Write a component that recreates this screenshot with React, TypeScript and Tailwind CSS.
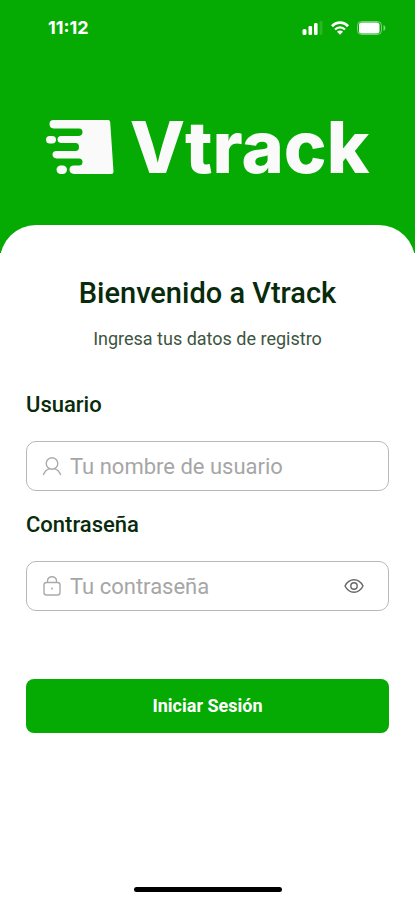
import { useState } from "react";
import type { ReactNode } from "react";

function SignalIcon() {
  return (
    <svg width="21" height="14" viewBox="0 0 21 14" fill="white" aria-hidden="true">
      <rect x="0.5" y="8" width="4" height="6" rx="1.6" />
      <rect x="6.5" y="5" width="3.6" height="9" rx="1.2" />
      <rect x="12" y="2" width="3.6" height="12" rx="1.2" />
      <rect x="17.5" y="0" width="3" height="14" rx="1.2" opacity="0.15" />
    </svg>
  );
}

function WifiIcon() {
  return (
    <svg width="18" height="14" viewBox="0 0 18 14" fill="none" stroke="white" aria-hidden="true">
      <path d="M1 5.2C5.4 0.3 12.6 0.3 17 5.2" strokeWidth="2.8" />
      <path d="M4 8.6C6.8 5.6 11.2 5.6 14 8.6" strokeWidth="2.2" />
      <path d="M9 13.8L6 10.8C7.8 9.2 10.2 9.2 12 10.8Z" fill="white" stroke="none" />
    </svg>
  );
}

function BatteryIcon() {
  return (
    <svg width="30" height="14" viewBox="0 0 30 14" fill="none" aria-hidden="true">
      <rect x="0.5" y="0.5" width="24" height="13" rx="4" stroke="white" strokeOpacity="0.45" />
      <rect x="2" y="1.5" width="20.5" height="11" rx="2.5" fill="white" />
      <path d="M26.5 4C29 5.2 29 8.8 26.5 10Z" fill="white" fillOpacity="0.5" />
    </svg>
  );
}

function StatusBar() {
  return (
    <div className="flex h-14 items-center justify-between pr-7 pl-12">
      <span className="font-[Inter,sans-serif] text-lg font-bold">11:12</span>
      <div className="flex items-center gap-2">
        <SignalIcon />
        <WifiIcon />
        <BatteryIcon />
      </div>
    </div>
  );
}

// Box with speed lines on its left side
function LogoMark() {
  return (
    <svg width="68" height="54" viewBox="0 0 68 54" fill="#fafafa" aria-hidden="true">
      <path d="M7.5 0H62Q64 0 64.2 2L67.5 51.5Q67.5 54 65 54H28Q23.5 53.5 23.5 49.5Q23.5 45.5 28 45.5H33Q36.5 45.5 36.5 42Q36.5 38.5 33 38.5H10.5Q6.5 38 6.5 34.5Q6.5 31 10.5 31H29.5Q33 31 33 27Q33 23 29.5 23H15Q11.5 22.5 11.5 19.5Q11.5 16 15 16H33Q36.5 15.5 36.5 12Q36.5 8.5 33 8.5H7.5Q3.5 8 3.5 4Q3.5 0 7.5 0Z" />
      <rect x="0" y="16" width="10" height="7.5" rx="3.7" />
      <rect x="10.5" y="45.5" width="10.5" height="8.5" rx="4.2" />
    </svg>
  );
}

function UserIcon() {
  return (
    <svg width="20" height="20" viewBox="0 0 20 20" fill="none" stroke="#aaaaaa" strokeWidth="1.4" strokeLinecap="round" aria-hidden="true">
      <circle cx="10" cy="7.5" r="5.8" />
      <path d="M1.5 18.5C2.7 15.4 4.7 13.6 7 12.8M13 12.8C15.3 13.6 17.3 15.4 18.5 18.5" />
    </svg>
  );
}

function LockIcon() {
  return (
    <svg width="20" height="20" viewBox="0 0 20 20" fill="none" stroke="#aaaaaa" strokeWidth="1.4" aria-hidden="true">
      <rect x="2" y="6.5" width="16" height="12.5" rx="2.5" />
      <path d="M5.5 6.5V5C5.500 2.200 7.500 0.800 10 0.800S14.500 2.200 14.500 5V6.500" />
      <circle cx="10" cy="12.5" r="1" fill="#aaaaaa" stroke="none" />
    </svg>
  );
}

function EyeIcon() {
  return (
    <svg width="20" height="16" viewBox="0 0 20 16" fill="none" stroke="#666666" strokeWidth="1.4" aria-hidden="true">
      <path d="M1 8C3 4 6 1.8 10 1.8S17 4 19 8C17 12 14 14.2 10 14.2S3 12 1 8Z" />
      <circle cx="10" cy="8" r="3.2" />
    </svg>
  );
}

interface FieldProps {
  id: string;
  label: string;
  placeholder: string;
  type: string;
  icon: ReactNode;
  action?: ReactNode;
}

function Field({ id, label, placeholder, type, icon, action }: FieldProps) {
  return (
    <div>
      <label htmlFor={id} className="block text-[22px] leading-8 font-medium text-[#082b0c]">
        {label}
      </label>
      <div className="mt-5 flex h-[50px] items-center gap-2 rounded-[10px] border border-[#b8b8b8] pr-6 pl-[15px]">
        {icon}
        <input
          id={id}
          type={type}
          placeholder={placeholder}
          className="min-w-0 flex-1 bg-transparent text-[22px] text-[#082b0c] outline-none placeholder:text-[#a6a6a6]"
        />
        {action}
      </div>
    </div>
  );
}

export default function App() {
  const [visible, setVisible] = useState(false);

  return (
    <div className="flex min-h-screen flex-col bg-white font-[Roboto,sans-serif]">
      <header className="bg-[#05aa02] pb-12 text-white">
        <StatusBar />
        <div className="flex h-[149px] items-center justify-center gap-4 pt-8">
          <LogoMark />
          <span className="font-[Inter,sans-serif] text-7xl leading-none font-extrabold text-[#fafafa]">Vtrack</span>
        </div>
      </header>

      <main className="-mt-7 flex flex-1 flex-col rounded-t-[36px] bg-white px-[26px] pt-12">
        <h1 className="text-center text-[29px] leading-10 font-medium text-[#082b0c]">Bienvenido a Vtrack</h1>
        <p className="mt-3 text-center text-lg leading-7 text-[#3c5540]">Ingresa tus datos de registro</p>

        <form className="mt-9" onSubmit={(e) => e.preventDefault()}>
          <div className="flex flex-col gap-[18px]">
            <Field
              id="usuario"
              label="Usuario"
              placeholder="Tu nombre de usuario"
              type="text"
              icon={<UserIcon />}
            />
            <Field
              id="contrasena"
              label="Contraseña"
              placeholder="Tu contraseña"
              type={visible ? "text" : "password"}
              icon={<LockIcon />}
              action={
                <button type="button" aria-label="Mostrar contraseña" onClick={() => setVisible(!visible)}>
                  <EyeIcon />
                </button>
              }
            />
          </div>
          <button type="submit" className="mt-[68px] h-[54px] w-full rounded-lg bg-[#05aa02] text-lg font-bold text-white">
            Iniciar Sesión
          </button>
        </form>

        {/* Home indicator */}
        <div className="mx-auto mt-auto mb-2 h-[5px] w-37 rounded-full bg-black" />
      </main>
    </div>
  );
}
